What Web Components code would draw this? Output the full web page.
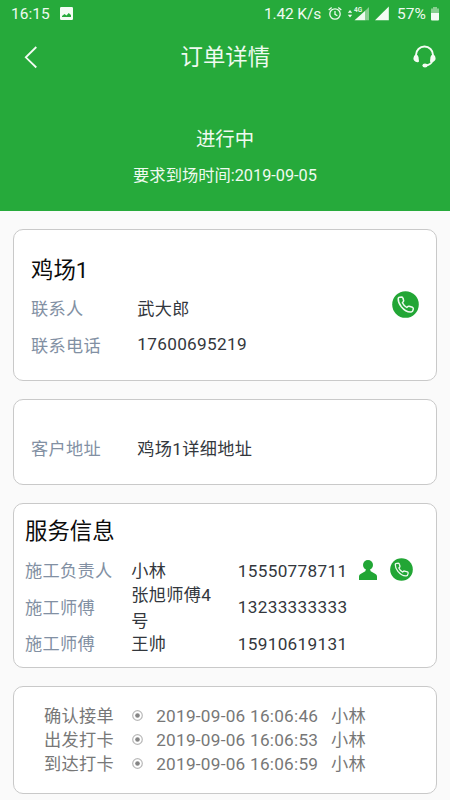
<!DOCTYPE html>
<html lang="zh-CN">
<head>
<meta charset="utf-8">
<meta name="viewport" content="width=device-width, initial-scale=1">
<title>订单详情</title>
<style>
html, body { margin: 0; height: 100%; }
body { background: #fafafa; overflow: hidden; font-family: Roboto, "Noto Sans CJK SC", sans-serif; }
</style>
</head>
<body>
<order-page></order-page>
<script>
function define(name, html) {
  const template = document.createElement('template');
  template.innerHTML = html;
  customElements.define(name, class extends HTMLElement {
    constructor() {
      super();
      this.attachShadow({ mode: 'open' }).append(template.content.cloneNode(true));
    }
  });
}

define('status-bar', `
<style>
:host { display: flex; height: 28px; align-items: center; padding: 0 11px 0 11px; font-size: 15.5px; line-height: 28px; color: #effaf0; box-sizing: border-box; }
span { white-space: pre; }
svg { display: block; flex: none; }
.time { width: 49px; }
.rate { margin-left: auto; width: 64px; letter-spacing: -.15px; }
.pct { width: 34px; }
.photo { margin-top: -2px; }
</style>
<span class="time">16:15</span>
<svg class="photo" width="13" height="13" viewBox="0 0 13 13"><path fill="#f4fcf4" fill-rule="evenodd" d="M1.2 0h10.6Q13 0 13 1.2v10.6Q13 13 11.800 13H1.200Q0 13 0 11.800V1.200Q0 0 1.200 0ZM2 10h9V8L8.700 6 6.500 8.500 4.500 7 2 9Z"/></svg>
<span class="rate">1.42 K/s</span>
<svg width="69" height="18" viewBox="0 0 69 18">
 <g fill="none" stroke="#effaf0" stroke-width="1.300"><circle cx="7" cy="9" r="5.200"/><path d="M7 6v3.400l2.400 1.400M.7 4.900 3.700 2.400M13.300 4.900l-3-2.500"/></g>
 <path fill="#effaf0" d="M19.800 7.700 22 5l2.200 2.700ZM19.800 9.800h4.400L22 12.500ZM26.500 15.300 37.500 5.500v9.800Z"/>
 <path fill="#88cf90" d="M37.500 5.500 41 2v13.300h-3.500Z"/>
 <text x="26" y="6.800" font-family="Roboto" font-size="6.500" font-weight="600" fill="#effaf0">4G</text>
 <path fill="#f4fcf4" d="M47 15.300 60.800 1.500v13.800Z"/>
</svg>
<span class="pct">57%</span>
<svg width="8" height="14" viewBox="0 0 8 14"><path fill="#88cf90" d="M0 1.500h2V0h4v1.500h2V7H0Z"/><path fill="#f4fcf4" d="M0 6h8v6.500q0 1-1 1H1q-1 0-1-1Z"/></svg>
`);

define('nav-bar', `
<style>
:host { display: grid; grid-template-columns: 156.500px 1fr 23px; height: 58px; align-items: center; padding: 0 14px 0 24px; box-sizing: border-box; color: #effaf0; }
h1 { margin: 0; font-size: 22.4px; font-weight: 400; line-height: 58px; }
svg { display: block; }
</style>
<svg width="23" height="24" viewBox="0 0 23 24"><path fill="none" stroke="#f4fcf4" stroke-width="1.800" d="M12.300 2 1.800 12.300 12.300 22.500"/></svg>
<h1><slot></slot></h1>
<svg width="23" height="24" viewBox="0 0 23 24"><path fill="none" stroke="#f4fcf4" stroke-width="1.900" d="M3 11.500V10a8.500 8.500 0 0 1 17 0v1.500M19.600 15.500q-1.500 4.300-6.600 5"/><path fill="#f4fcf4" d="M3 9.500q2 0 2.500 2.500l.5 4.200q-.3 1.300-1.600 1Q.3 16.500.4 13.300.6 10.300 3 9.500ZM20 9.500q2.600.8 2.600 3.800.1 3.200-4 3.900-1.300.300-1.600-1l.5-4.200Q18 9.500 20 9.500Z"/><ellipse cx="12" cy="20.500" rx="2.600" ry="2.100" fill="#f4fcf4"/></svg>
`);

define('order-status', `
<style>
:host { display: flex; flex-direction: column; align-items: center; color: #effaf0; padding-top: 36px; }
.state { font-size: 19.400px; line-height: 36px; }
.when { font-size: 16.300px; line-height: 36px; }
</style>
<div class="state"><slot name="state"></slot></div>
<div class="when"><slot></slot></div>
`);

define('info-card', `
<style>
:host { display: block; box-sizing: border-box; margin: 0 13px 0 12.500px; border: 1.300px solid #c9c9c9; border-radius: 10px; background: #fff; font-size: 17.200px; letter-spacing: .3px; }
</style>
<slot></slot>
`);

define('card-title', `
<style>:host { display: block; font-size: 22.400px; line-height: 36px; letter-spacing: 0; color: #0c0c0c; }</style>
<slot></slot>
`);

define('phone-icon', `
<style>:host { display: block; width: 23px; height: 23px; } svg { display: block; width: 100%; height: 100%; }</style>
<svg viewBox="0 0 27 27"><circle cx="13.500" cy="13.500" r="13.300" fill="#22a635"/><path fill="none" stroke="#effaf0" stroke-width="1.500" stroke-linejoin="round" d="M6.200 7.500C6.300 6.400 8 5.900 9.700 5.900Q10.700 6 11 7.300L11.700 9.700Q11.800 10.600 10.400 11.700 11.500 14.300 14.800 16.500 16.200 15.100 17.100 15.300L20.500 16.300Q21.500 16.800 21.300 18 20.800 20.900 19.200 21 14 21.500 9.300 15.800 6 11.500 6.200 7.500Z"/></svg>
`);

define('person-icon', `
<style>:host, svg { display: block; width: 18px; height: 20px; }</style>
<svg viewBox="0 0 18 20"><circle cx="9" cy="5" r="5" fill="#22a635"/><path fill="#22a635" d="M7 9h4l.7 2.200 4.800 2.900Q18 15 18 16.500V20H0v-3.500Q0 15 1.500 14.100l4.800-2.900Z"/></svg>
`);

define('field-row', `
<style>
:host { display: flex; align-items: center; height: 36.500px; color: #33373d; }
.label { flex: none; width: 106.300px; color: #8290a3; }
.end { margin-left: auto; margin-right: 17.500px; }
::slotted(phone-icon) { width: 27px; height: 27px; margin-top: -7px; }
</style>
<span class="label"><slot name="label"></slot></span>
<span><slot></slot></span>
<span class="end"><slot name="end"></slot></span>
`);

define('worker-row', `
<style>
:host { display: grid; grid-template-columns: 106.300px 87px 120px 1fr; grid-template-rows: 36.500px; align-items: center; height: 36.500px; color: #33373d; line-height: 26px; }
.label { color: #8290a3; }
.name { width: 87px; }
.phone { padding-left: 19.500px; margin-top: -1px; }
.icons { display: flex; align-items: center; gap: 12.500px; padding-left: 21px; margin-top: -3px; }
</style>
<span class="label"><slot name="label"></slot></span>
<span class="name"><slot></slot></span>
<span class="phone"><slot name="phone"></slot></span>
<span class="icons"><slot name="icons"></slot></span>
`);

define('log-row', `
<style>
:host { display: flex; align-items: center; height: 24px; line-height: 24px; color: #777; white-space: pre; }
.step { width: 88px; }
svg { display: block; flex: none; margin-top: -1px; }
.time { box-sizing: border-box; width: 188px; padding-left: 13.200px; letter-spacing: .250px; }
</style>
<span class="step"><slot name="step"></slot></span>
<svg width="11" height="11" viewBox="0 0 11 11"><circle cx="5.500" cy="5.500" r="4.800" fill="none" stroke="#b9b9b9" stroke-width="1.200"/><circle cx="5.500" cy="5.500" r="2.300" fill="#858585"/></svg>
<span class="time"><slot></slot></span>
<span><slot name="who"></slot></span>
`);

define('order-page', `
<style>
:host { display: block; }
header { height: 210.500px; background: #26aa3b; }
main { display: flex; flex-direction: column; gap: 18px; padding-top: 18px; }
.customer { height: 152.500px; padding: 22px 0 0 17.500px; }
.customer card-title { margin-bottom: 2px; }
.address { height: 86px; padding: 29px 0 0 17.500px; }
.service { height: 165px; padding: 9px 0 0 11.500px; }
.log { height: 108px; padding: 16.500px 0 0 30.500px; }
.service card-title { margin-bottom: 4px; }
</style>
<header>
 <status-bar></status-bar>
 <nav-bar>订单详情</nav-bar>
 <order-status><span slot="state">进行中</span>要求到场时间:2019-09-05</order-status>
</header>
<main>
 <info-card class="customer">
  <card-title>鸡场1</card-title>
  <field-row><span slot="label">联系人</span>武大郎<phone-icon slot="end"></phone-icon></field-row>
  <field-row><span slot="label">联系电话</span>17600695219</field-row>
 </info-card>
 <info-card class="address">
  <field-row><span slot="label">客户地址</span>鸡场1详细地址</field-row>
 </info-card>
 <info-card class="service">
  <card-title>服务信息</card-title>
  <worker-row><span slot="label">施工负责人</span>小林<span slot="phone">15550778711</span><person-icon slot="icons"></person-icon><phone-icon slot="icons"></phone-icon></worker-row>
  <worker-row><span slot="label">施工师傅</span>张旭师傅4号<span slot="phone">13233333333</span></worker-row>
  <worker-row><span slot="label">施工师傅</span>王帅<span slot="phone">15910619131</span></worker-row>
 </info-card>
 <info-card class="log">
  <log-row><span slot="step">确认接单</span>2019-09-06 16:06:46<span slot="who">小林</span></log-row>
  <log-row><span slot="step">出发打卡</span>2019-09-06 16:06:53<span slot="who">小林</span></log-row>
  <log-row><span slot="step">到达打卡</span>2019-09-06 16:06:59<span slot="who">小林</span></log-row>
 </info-card>
</main>
`);
</script>
</body>
</html>
